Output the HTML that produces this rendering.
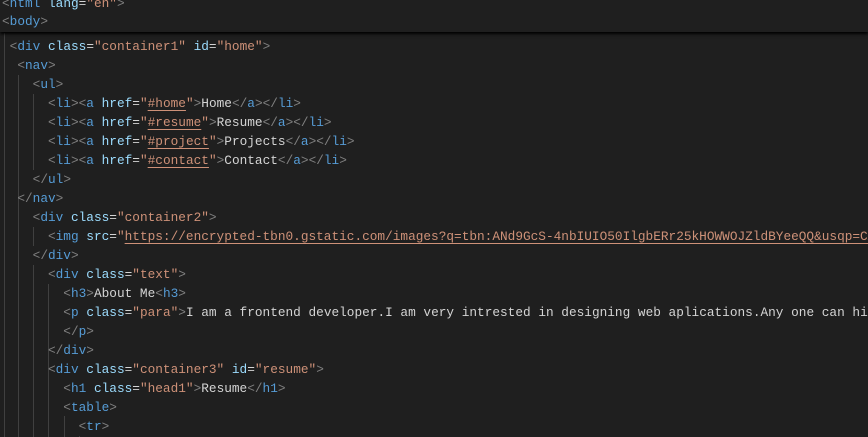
<!DOCTYPE html>
<html lang="en"><head><meta charset="utf-8"><style>
html,body{margin:0;padding:0;background:#1f1f1f;width:868px;height:437px;overflow:hidden}
.ed{position:absolute;left:0;top:0;width:868px;height:437px;font-family:"Liberation Mono",monospace;font-size:12.77px;color:#d4d4d4}
.l{position:absolute;left:2px;white-space:pre;height:19px;line-height:19px}
.b{color:#808080}.t{color:#569cd6}.a{color:#9cdcfe}.s{color:#ce9178}
.u{text-decoration:underline;text-decoration-color:#ce9178;text-underline-offset:3px}
.g{position:absolute;width:1px;background:#404040}
.sticky{position:absolute;left:0;top:0;width:868px;height:32px;background:#1f1f1f;box-shadow:0 2px 3px #000;z-index:2}
</style></head><body><div class="ed">
<div class="sticky">
<div class="l" style="top:-6px"><span class="b">&lt;</span><span class="t">html</span> <span class="a">lang</span>=<span class="s">"en"</span><span class="b">&gt;</span></div>
<div class="l" style="top:12px"><span class="b">&lt;</span><span class="t">body</span><span class="b">&gt;</span></div>
</div>
<div class="g" style="left:4px;top:33px;height:404px"></div>
<div class="g" style="left:18px;top:75px;height:362px"></div>
<div class="g" style="left:33px;top:94px;height:76px"></div>
<div class="g" style="left:33px;top:227px;height:19px"></div>
<div class="g" style="left:33px;top:265px;height:172px"></div>
<div class="g" style="left:48px;top:284px;height:57px"></div>
<div class="g" style="left:48px;top:341px;height:96px"></div>
<div class="g" style="left:79px;top:436px;height:1px"></div>
<div class="g" style="left:64px;top:416px;height:21px"></div>

<div class="l" style="top:37px"> <span class="b">&lt;</span><span class="t">div</span> <span class="a">class</span>=<span class="s">"container1"</span> <span class="a">id</span>=<span class="s">"home"</span><span class="b">&gt;</span></div>
<div class="l" style="top:56px">  <span class="b">&lt;</span><span class="t">nav</span><span class="b">&gt;</span></div>
<div class="l" style="top:75px">    <span class="b">&lt;</span><span class="t">ul</span><span class="b">&gt;</span></div>
<div class="l" style="top:94px">      <span class="b">&lt;</span><span class="t">li</span><span class="b">&gt;&lt;</span><span class="t">a</span> <span class="a">href</span>=<span class="s">"<span class="u">#home</span>"</span><span class="b">&gt;</span>Home<span class="b">&lt;/</span><span class="t">a</span><span class="b">&gt;&lt;/</span><span class="t">li</span><span class="b">&gt;</span></div>
<div class="l" style="top:113px">      <span class="b">&lt;</span><span class="t">li</span><span class="b">&gt;&lt;</span><span class="t">a</span> <span class="a">href</span>=<span class="s">"<span class="u">#resume</span>"</span><span class="b">&gt;</span>Resume<span class="b">&lt;/</span><span class="t">a</span><span class="b">&gt;&lt;/</span><span class="t">li</span><span class="b">&gt;</span></div>
<div class="l" style="top:132px">      <span class="b">&lt;</span><span class="t">li</span><span class="b">&gt;&lt;</span><span class="t">a</span> <span class="a">href</span>=<span class="s">"<span class="u">#project</span>"</span><span class="b">&gt;</span>Projects<span class="b">&lt;/</span><span class="t">a</span><span class="b">&gt;&lt;/</span><span class="t">li</span><span class="b">&gt;</span></div>
<div class="l" style="top:151px">      <span class="b">&lt;</span><span class="t">li</span><span class="b">&gt;&lt;</span><span class="t">a</span> <span class="a">href</span>=<span class="s">"<span class="u">#contact</span>"</span><span class="b">&gt;</span>Contact<span class="b">&lt;/</span><span class="t">a</span><span class="b">&gt;&lt;/</span><span class="t">li</span><span class="b">&gt;</span></div>
<div class="l" style="top:170px">    <span class="b">&lt;/</span><span class="t">ul</span><span class="b">&gt;</span></div>
<div class="l" style="top:189px">  <span class="b">&lt;/</span><span class="t">nav</span><span class="b">&gt;</span></div>
<div class="l" style="top:208px">    <span class="b">&lt;</span><span class="t">div</span> <span class="a">class</span>=<span class="s">"container2"</span><span class="b">&gt;</span></div>
<div class="l" style="top:227px">      <span class="b">&lt;</span><span class="t">img</span> <span class="a">src</span>=<span class="s">"<span class="u">https://encrypted-tbn0.gstatic.com/images?q=tbn:ANd9GcS-4nbIUIO50IlgbERr25kHOWWOJZldBYeeQQ&amp;usqp=CAU</span>"</span></div>
<div class="l" style="top:246px">    <span class="b">&lt;/</span><span class="t">div</span><span class="b">&gt;</span></div>
<div class="l" style="top:265px">      <span class="b">&lt;</span><span class="t">div</span> <span class="a">class</span>=<span class="s">"text"</span><span class="b">&gt;</span></div>
<div class="l" style="top:284px">        <span class="b">&lt;</span><span class="t">h3</span><span class="b">&gt;</span>About Me<span class="b">&lt;</span><span class="t">h3</span><span class="b">&gt;</span></div>
<div class="l" style="top:303px">        <span class="b">&lt;</span><span class="t">p</span> <span class="a">class</span>=<span class="s">"para"</span><span class="b">&gt;</span>I am a frontend developer.I am very intrested in designing web aplications.Any one can hire me</div>
<div class="l" style="top:322px">        <span class="b">&lt;/</span><span class="t">p</span><span class="b">&gt;</span></div>
<div class="l" style="top:341px">      <span class="b">&lt;/</span><span class="t">div</span><span class="b">&gt;</span></div>
<div class="l" style="top:360px">      <span class="b">&lt;</span><span class="t">div</span> <span class="a">class</span>=<span class="s">"container3"</span> <span class="a">id</span>=<span class="s">"resume"</span><span class="b">&gt;</span></div>
<div class="l" style="top:379px">        <span class="b">&lt;</span><span class="t">h1</span> <span class="a">class</span>=<span class="s">"head1"</span><span class="b">&gt;</span>Resume<span class="b">&lt;/</span><span class="t">h1</span><span class="b">&gt;</span></div>
<div class="l" style="top:398px">        <span class="b">&lt;</span><span class="t">table</span><span class="b">&gt;</span></div>
<div class="l" style="top:417px">          <span class="b">&lt;</span><span class="t">tr</span><span class="b">&gt;</span></div>
</div></body></html>
